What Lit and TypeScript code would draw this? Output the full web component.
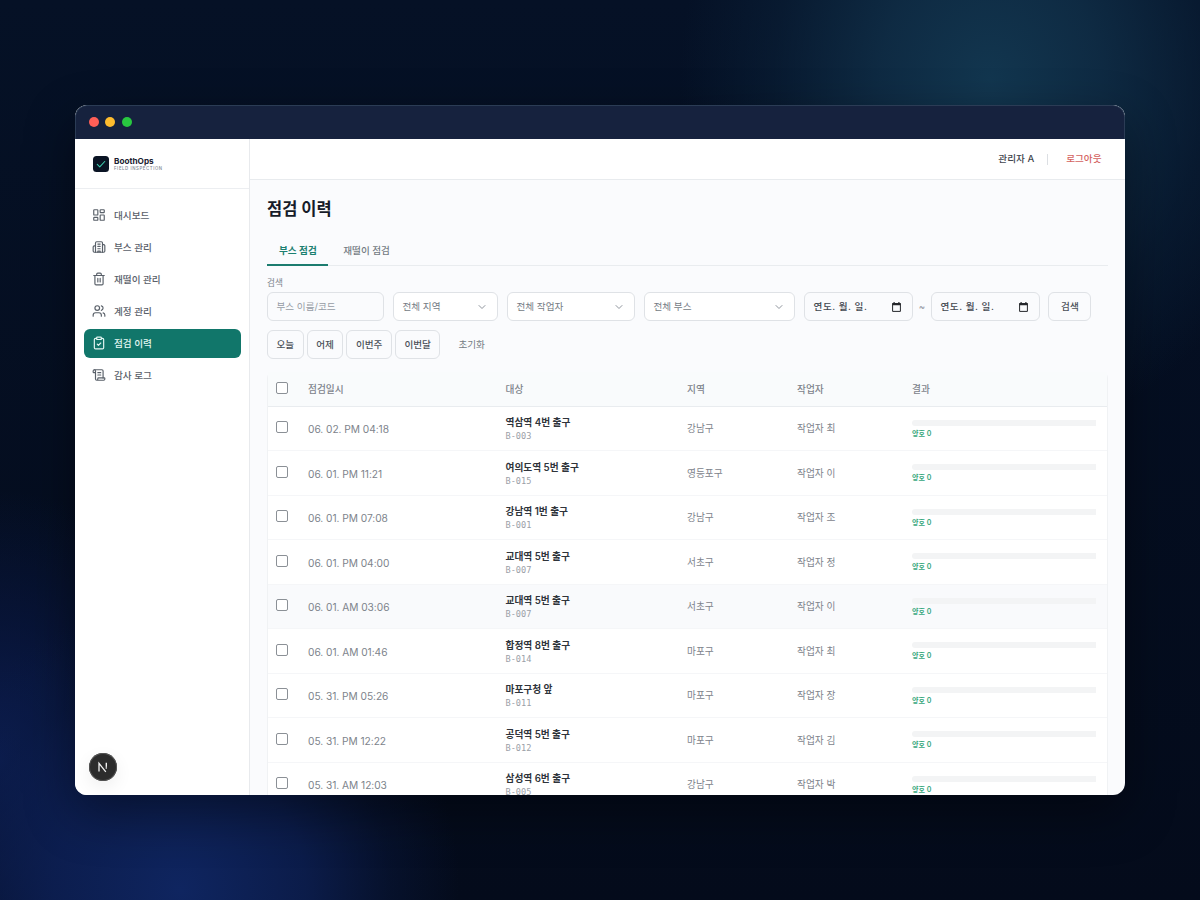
import { LitElement, css, html, svg } from "lit";
import { customElement, property } from "lit/decorators.js";
import { classMap } from "lit/directives/class-map.js";

const ICONS: Record<string, unknown> = {
  dashboard: svg`<rect x="3" y="3" width="7" height="9" rx="1"/><rect x="14" y="3" width="7" height="5" rx="1"/><rect x="14" y="12" width="7" height="9" rx="1"/><rect x="3" y="16" width="7" height="5" rx="1"/>`,
  building: svg`<path d="M6 21V5a2 2 0 0 1 2-2h8a2 2 0 0 1 2 2v16"/><path d="M6 10H4a2 2 0 0 0-2 2v7a2 2 0 0 0 2 2h16a2 2 0 0 0 2-2v-9a2 2 0 0 0-2-2h-2"/><path d="M10 7h4M10 11h4M10 15h4M10 21v-2h4v2"/>`,
  trash: svg`<path d="M3 6h18"/><path d="M19 6v14a2 2 0 0 1-2 2H7a2 2 0 0 1-2-2V6"/><path d="M8 6V4a2 2 0 0 1 2-2h4a2 2 0 0 1 2 2v2"/><path d="M10 11v6M14 11v6"/>`,
  users: svg`<path d="M16 21v-2a4 4 0 0 0-4-4H6a4 4 0 0 0-4 4v2"/><circle cx="9" cy="7" r="4"/><path d="M22 21v-2a4 4 0 0 0-3-3.87"/><path d="M16 3.13a4 4 0 0 1 0 7.75"/>`,
  clipboard: svg`<rect x="8" y="2" width="8" height="4" rx="1"/><path d="M16 4h2a2 2 0 0 1 2 2v14a2 2 0 0 1-2 2H6a2 2 0 0 1-2-2V6a2 2 0 0 1 2-2h2"/><path d="m9 14 2 2 4-4"/>`,
  scroll: svg`<path d="M15 12h-5M15 8h-5"/><path d="M19 17V5a2 2 0 0 0-2-2H4"/><path d="M8 21h12a2 2 0 0 0 2-2v-1a1 1 0 0 0-1-1H11a1 1 0 0 0-1 1v1a2 2 0 1 1-4 0V5a2 2 0 1 0-4 0v2a1 1 0 0 0 1 1h3"/>`,
  chevron: svg`<path d="m6 9 6 6 6-6"/>`,
  check: svg`<path d="m3 13 6 6L21 6"/>`,
};

const icon = (name: string) => html`<svg class="icon" viewBox="0 0 24 24">${ICONS[name]}</svg>`;

const MENU = [
  { icon: "dashboard", label: "대시보드" },
  { icon: "building", label: "부스 관리" },
  { icon: "trash", label: "재떨이 관리" },
  { icon: "users", label: "계정 관리" },
  { icon: "clipboard", label: "점검 이력", active: true },
  { icon: "scroll", label: "감사 로그" },
];

const ROWS = [
  { date: "06. 02. PM 04:18", booth: "역삼역 4번 출구", code: "B-003", area: "강남구", worker: "작업자 최" },
  { date: "06. 01. PM 11:21", booth: "여의도역 5번 출구", code: "B-015", area: "영등포구", worker: "작업자 이" },
  { date: "06. 01. PM 07:08", booth: "강남역 1번 출구", code: "B-001", area: "강남구", worker: "작업자 조" },
  { date: "06. 01. PM 04:00", booth: "교대역 5번 출구", code: "B-007", area: "서초구", worker: "작업자 정" },
  { date: "06. 01. AM 03:06", booth: "교대역 5번 출구", code: "B-007", area: "서초구", worker: "작업자 이", hover: true },
  { date: "06. 01. AM 01:46", booth: "합정역 8번 출구", code: "B-014", area: "마포구", worker: "작업자 최" },
  { date: "05. 31. PM 05:26", booth: "마포구청 앞", code: "B-011", area: "마포구", worker: "작업자 장" },
  { date: "05. 31. PM 12:22", booth: "공덕역 5번 출구", code: "B-012", area: "마포구", worker: "작업자 김" },
  { date: "05. 31. AM 12:03", booth: "삼성역 6번 출구", code: "B-005", area: "강남구", worker: "작업자 박" },
];

const iconStyles = css`
  .icon {
    display: block;
    fill: none;
    stroke: currentColor;
    stroke-width: 2;
    stroke-linecap: round;
    stroke-linejoin: round;
    flex: none;
  }
`;

@customElement("side-bar")
export class SideBar extends LitElement {
  static styles = [
    iconStyles,
    css`
      :host {
        position: relative;
        display: flex;
        flex-direction: column;
        flex: none;
        width: 174px;
        border-right: 1px solid #e8eaed;
        background: #fff;
      }

      .brand {
        display: flex;
        align-items: center;
        gap: 5px;
        height: 49px;
        padding-left: 18px;
        border-bottom: 1px solid #eceef1;
      }

      .logo {
        display: grid;
        place-items: center;
        width: 16px;
        height: 16px;
        border-radius: 3.5px;
        background: #0a1424;
        color: #3fd0b2;
      }

      .logo .icon {
        width: 10px;
        height: 10px;
        stroke-width: 2.5;
      }

      .name {
        padding-top: 2px;
        color: #1b2130;
        font-size: 8.2px;
        font-weight: 700;
        line-height: 9px;
      }

      .tagline {
        color: #7c8490;
        font-size: 4.3px;
        font-weight: 500;
        line-height: 6px;
        letter-spacing: 0.59px;
      }

      .menu {
        display: flex;
        flex-direction: column;
        gap: 3px;
        padding: 12px 8.5px 0;
      }

      .item {
        display: flex;
        align-items: center;
        gap: 8px;
        height: 29px;
        padding-left: 8.500px;
        border-radius: 6px;
        color: #596069;
        font-weight: 500;
      }

      .item .icon {
        width: 14px;
        height: 14px;
        margin-top: -1px;
      }

      .active {
        background: #11766a;
        color: #e4f6f2;
      }

      .dev {
        position: absolute;
        left: 14px;
        bottom: 14px;
        width: 28px;
        height: 28px;
        border-radius: 50%;
        background: #2c2c2c;
        box-shadow: inset 0 0 0 1px #555, 0 6px 18px rgba(0, 0, 0, 0.07);
      }
    `,
  ];

  render() {
    return html`
      <div class="brand">
        <div class="logo">${icon("check")}</div>
        <div>
          <div class="name">BoothOps</div>
          <div class="tagline">FIELD INSPECTION</div>
        </div>
      </div>
      <nav class="menu">
        ${MENU.map(
          (m) => html`<div class=${classMap({ item: true, active: !!m.active })}>
            ${icon(m.icon)}<span>${m.label}</span>
          </div>`
        )}
      </nav>
      <svg class="dev" viewBox="0 0 28 28" fill="none" stroke-width="1.3">
        <defs>
          <linearGradient id="fade" x1="0" y1="10" x2="0" y2="19" gradientUnits="userSpaceOnUse">
            <stop offset="0.3" stop-color="#fff" />
            <stop offset="1" stop-color="#fff" stop-opacity="0.15" />
          </linearGradient>
        </defs>
        <path d="M10 18.5V10.3L16.8 18.8" stroke="#f2f2f2" />
        <path d="M17.3 9.8V16" stroke="url(#fade)" />
      </svg>
    `;
  }
}

@customElement("filter-bar")
export class FilterBar extends LitElement {
  static styles = [
    iconStyles,
    css`
      :host {
        display: block;
      }

      .label {
        height: 14px;
        margin-top: 10px;
        color: #7b828b;
        font-size: 8.6px;
        line-height: 14px;
      }

      .fields {
        display: flex;
        align-items: center;
        gap: 9px;
        margin-top: 2px;
      }

      .box {
        display: flex;
        align-items: center;
        justify-content: space-between;
        box-sizing: border-box;
        height: 29px;
        padding: 0 9px 0 8.5px;
        border: 1px solid #dfe2e6;
        border-radius: 6px;
        color: #747b84;
        white-space: pre;
      }

      .input {
        width: 117px;
        color: #969ca5;
      }

      .area {
        width: 105px;
        background: #fff;
      }

      .worker {
        width: 128px;
        background: #fff;
      }

      .booth {
        width: 151px;
        background: #fff;
      }

      .box .icon {
        width: 12px;
        height: 12px;
        color: #8f959d;
      }

      .range {
        display: flex;
        align-items: center;
        justify-content: space-between;
        width: 236px;
        color: #8c929b;
      }

      .date {
        width: 109px;
        color: #42474f;
        font-weight: 500;
        letter-spacing: 0.55px;
      }

      .date .calendar {
        width: 9px;
        height: 10px;
        margin-right: 2px;
      }

      .button {
        justify-content: center;
        padding: 0;
        color: #4b5159;
        font-weight: 500;
      }

      .search {
        width: 43px;
        margin-left: -0.6px;
      }

      .quick {
        display: flex;
        align-items: center;
        gap: 3px;
        margin-top: 9px;
      }

      .short {
        width: 36.7px;
      }

      .long {
        width: 45.5px;
      }

      .reset {
        margin-left: 15px;
        color: #747b84;
      }
    `,
  ];

  private date() {
    return html`<div class="box date">
      <span>연도. 월. 일.</span>
      <svg class="calendar" viewBox="0 0 9 10">
        <path d="M0.6 1.5h7.8v7.9H0.6z" fill="none" stroke="#24272b" />
        <path d="M0.5 1h8v2.2h-8zM1.5 0h1.2v1.5H1.5zM6.3 0h1.2v1.5H6.3z" fill="#24272b" />
      </svg>
    </div>`;
  }

  render() {
    return html`
      <div class="label">검색</div>
      <div class="fields">
        <div class="box input">부스 이름/코드</div>
        <div class="box area">전체 지역${icon("chevron")}</div>
        <div class="box worker">전체 작업자${icon("chevron")}</div>
        <div class="box booth">전체 부스${icon("chevron")}</div>
        <div class="range">${this.date()}<span>~</span>${this.date()}</div>
        <div class="box button search">검색</div>
      </div>
      <div class="quick">
        <div class="box button short">오늘</div>
        <div class="box button short">어제</div>
        <div class="box button long">이번주</div>
        <div class="box button long">이번달</div>
        <div class="reset">초기화</div>
      </div>
    `;
  }
}

@customElement("history-table")
export class HistoryTable extends LitElement {
  @property({ attribute: false }) rows: typeof ROWS = [];

  static styles = css`
    :host {
      display: block;
      margin-top: 13px;
      border: 1px solid #f0f2f4;
      border-top: none;
      border-radius: 6px 6px 0 0;
      background: #fff;
    }

    .row {
      display: grid;
      grid-template-columns: 40px 197.5px 181.5px 110px 115px 184px;
      box-sizing: border-box;
      height: 44.5px;
      padding-top: 2px;
      border-bottom: 1px solid #f5f6f8;
      color: #7d838b;
      font-size: 9.7px;
      align-items: center;
    }

    .head {
      height: 34.5px;
      padding-top: 3px;
      border-bottom-color: #e9ecef;
      background: #f9fbfc;
      font-weight: 500;
    }

    .hover {
      background: #f9fafc;
    }

    .check {
      box-sizing: border-box;
      width: 12px;
      height: 12px;
      margin: 0 0 4px 8px;
      border: 1px solid #8b9096;
      border-radius: 2px;
      background: #fff;
    }

    .time {
      font-size: 10.2px;
      letter-spacing: -0.04px;
    }

    .booth {
      color: #2f343b;
      font-weight: 600;
      line-height: 14px;
    }

    .code {
      color: #9ba0a7;
      font-family: "DejaVu Sans Mono", monospace;
      font-size: 8.6px;
      line-height: 12px;
    }

    .bar {
      height: 6px;
      border-radius: 3px 0 0 3px;
      background: #f3f4f5;
    }

    .good {
      margin-top: 3px;
      color: #35a67c;
      font-size: 7px;
      font-weight: 600;
      line-height: 10px;
    }
  `;

  render() {
    return html`
      <div class="row head">
        <span class="check"></span>
        <span>점검일시</span>
        <span>대상</span>
        <span>지역</span>
        <span>작업자</span>
        <span>결과</span>
      </div>
      ${this.rows.map(
        (r) => html`<div class=${classMap({ row: true, hover: !!r.hover })}>
          <span class="check"></span>
          <span class="time">${r.date}</span>
          <div>
            <div class="booth">${r.booth}</div>
            <div class="code">${r.code}</div>
          </div>
          <span>${r.area}</span>
          <span>${r.worker}</span>
          <div>
            <div class="bar"></div>
            <div class="good">양호 0</div>
          </div>
        </div>`
      )}
    `;
  }
}

@customElement("app-root")
export class AppRoot extends LitElement {
  static styles = css`
    :host {
      display: flex;
      align-items: center;
      justify-content: center;
      height: 900px;
      overflow: hidden;
      background:
        radial-gradient(ellipse 310px 360px at 990px 80px, #12364f 0%, #102f48d9 35%, #0b233b80 70%, transparent 100%),
        radial-gradient(ellipse 280px 290px at 180px 890px, #0f2560 0%, #0d2055cc 45%, #0a1a4466 75%, transparent 100%),
        radial-gradient(ellipse 220px 270px at 0 760px, #0c1d50 0%, #0a194799 50%, transparent 100%),
        linear-gradient(#051126, #040b1b);
      font-family: Inter, "Noto Sans CJK KR", sans-serif;
      font-size: 9.6px;
      line-height: 14px;
    }

    .window {
      display: flex;
      flex-direction: column;
      width: 1050px;
      height: 690px;
      border-radius: 12px;
      overflow: hidden;
      background: #fafbfd;
      box-shadow: 0 18px 50px rgba(0, 0, 0, 0.4);
    }

    .titlebar {
      display: flex;
      align-items: center;
      gap: 6.5px;
      flex: none;
      height: 34px;
      box-sizing: border-box;
      padding: 0 0 1px 12.5px;
      border: 1px solid #2b3c55;
      border-bottom: none;
      border-radius: 12px 12px 0 0;
      background: #16223e;
    }

    .dot {
      width: 10px;
      height: 10px;
      border-radius: 50%;
    }

    .red {
      background: #ff5f57;
    }

    .yellow {
      background: #febc2e;
    }

    .green {
      background: #28c840;
    }

    .body {
      display: flex;
      flex: 1;
      min-height: 0;
    }

    .content {
      flex: 1;
      min-width: 0;
    }

    .topbar {
      display: flex;
      align-items: center;
      justify-content: flex-end;
      height: 40px;
      padding-right: 23.5px;
      border-bottom: 1px solid #e8ebee;
      background: #fff;
      color: #41464e;
      font-weight: 500;
    }

    .divider {
      width: 1px;
      height: 11px;
      margin: 0 18px 0 13px;
      background: #dcdfe3;
    }

    .logout {
      color: #d4635f;
    }

    .page {
      padding: 0 17px 0 17px;
    }

    .title {
      padding-top: 17px;
      color: #161b29;
      font-size: 16.5px;
      font-weight: 700;
      line-height: 24px;
    }

    .tabs {
      display: flex;
      gap: 3px;
      height: 28px;
      margin-top: 16px;
      border-bottom: 1px solid #e9ecef;
    }

    .tab {
      height: 27px;
      padding: 0 11.5px 0 12px;
      color: #747b84;
      font-weight: 500;
      line-height: 28px;
    }

    .selected {
      border-bottom: 2px solid #1c7c6f;
      color: #1c8070;
      font-weight: 600;
    }
  `;

  render() {
    return html`<div class="window">
      <div class="titlebar">
        <span class="dot red"></span>
        <span class="dot yellow"></span>
        <span class="dot green"></span>
      </div>
      <div class="body">
        <side-bar></side-bar>
        <div class="content">
          <div class="topbar">
            <span>관리자 A</span>
            <span class="divider"></span>
            <span class="logout">로그아웃</span>
          </div>
          <div class="page">
            <div class="title">점검 이력</div>
            <div class="tabs">
              <div class="tab selected">부스 점검</div>
              <div class="tab">재떨이 점검</div>
            </div>
            <filter-bar></filter-bar>
            <history-table .rows=${ROWS}></history-table>
          </div>
        </div>
      </div>
    </div>`;
  }
}
